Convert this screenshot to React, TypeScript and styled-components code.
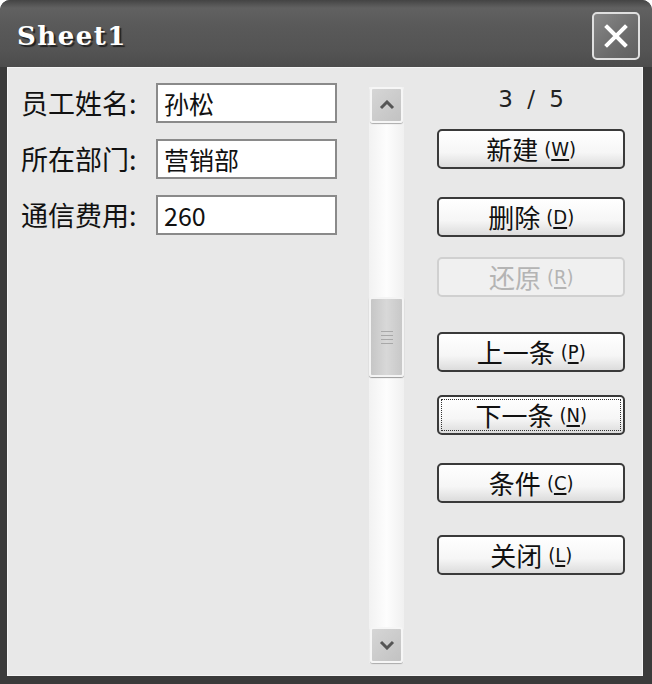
import styled, { createGlobalStyle } from "styled-components";

const GlobalStyle = createGlobalStyle`
  html, body {
    margin: 0;
    padding: 0;
    background: #fff;
  }
  * {
    box-sizing: border-box;
  }
`;

const fields = [
  { label: "员工姓名", value: "孙松" },
  { label: "所在部门", value: "营销部" },
  { label: "通信费用", value: "260" },
];

const buttons = [
  { text: "新建", key: "W", top: 14 },
  { text: "删除", key: "D", top: 28 },
  { text: "还原", key: "R", top: 20, disabled: true },
  { text: "上一条", key: "P", top: 35 },
  { text: "下一条", key: "N", top: 23, focused: true },
  { text: "条件", key: "C", top: 28 },
  { text: "关闭", key: "L", top: 32 },
];

export default function App() {
  return (
    <>
      <GlobalStyle />
      <Window>
        <TitleBar>
          <Title>Sheet1</Title>
          <CloseButton>
            <svg width="26" height="26" viewBox="0 0 26 26">
              <path
                d="M4 4 L22 22 M22 4 L4 22"
                stroke="#fff"
                strokeWidth="4"
                strokeLinecap="square"
              />
            </svg>
          </CloseButton>
        </TitleBar>
        <Body>
          <FieldList>
            {fields.map((f) => (
              <FieldRow key={f.label}>
                <Label>{f.label}:</Label>
                <Input>{f.value}</Input>
              </FieldRow>
            ))}
          </FieldList>
          <ScrollBar>
            <ScrollArrow>
              <svg width="16" height="10" viewBox="0 0 16 10">
                <path d="M2 8 L8 2 L14 8" stroke="#555" strokeWidth="3" fill="none" />
              </svg>
            </ScrollArrow>
            <Track>
              <Thumb $top={174}>
                <Grip />
                <Grip />
                <Grip />
                <Grip />
              </Thumb>
            </Track>
            <ScrollArrow>
              <svg width="16" height="10" viewBox="0 0 16 10">
                <path d="M2 2 L8 8 L14 2" stroke="#555" strokeWidth="3" fill="none" />
              </svg>
            </ScrollArrow>
          </ScrollBar>
          <ButtonColumn>
            <Counter>3 / 5</Counter>
            {buttons.map((b) => (
              <Button
                key={b.key}
                $top={b.top}
                $disabled={b.disabled}
                $focused={b.focused}
              >
                <span>{b.text}</span>
                <Mnemonic>
                  (<u>{b.key}</u>)
                </Mnemonic>
              </Button>
            ))}
          </ButtonColumn>
        </Body>
      </Window>
    </>
  );
}

const Window = styled.div`
  width: 652px;
  height: 684px;
  display: flex;
  flex-direction: column;
  background: #3a3a3a;
  border-radius: 10px 10px 0 0;
  overflow: hidden;
`;

const TitleBar = styled.div`
  height: 67px;
  flex: none;
  display: flex;
  align-items: center;
  justify-content: space-between;
  padding: 0 12px 0 17px;
  background: linear-gradient(
    to bottom,
    #444 0%,
    #616161 12%,
    #595959 40%,
    #545454 75%,
    #4c4c4c 100%
  );
`;

const Title = styled.div`
  font-family: "DejaVu Serif", "Liberation Serif", serif;
  font-weight: bold;
  font-size: 26px;
  color: #fff;
  letter-spacing: 1.5px;
  text-shadow: 2px 2px 1px #222;
  margin-top: 4px;
`;

const CloseButton = styled.div`
  width: 48px;
  height: 48px;
  display: flex;
  align-items: center;
  justify-content: center;
  border: 2px solid #e0e0e0;
  border-radius: 5px;
  background: linear-gradient(135deg, #888 0%, #6c6c6c 60%, #606060 100%);
  margin-top: 4px;
`;

const Body = styled.div`
  flex: 1;
  display: flex;
  align-items: stretch;
  margin: 0 9px 8px 7px;
  background: #e8e8e8;
  padding: 15px 17px 12px 13px;
  border: 1px solid #f4f4f4;
`;

const FieldList = styled.div`
  width: 323px;
  display: flex;
  flex-direction: column;
  gap: 16px;
`;

const FieldRow = styled.div`
  display: flex;
  align-items: center;
`;

const Label = styled.div`
  width: 135px;
  font-family: "Noto Sans CJK SC", sans-serif;
  font-size: 27px;
  color: #111;
  line-height: 40px;
`;

const Input = styled.div`
  width: 181px;
  height: 40px;
  background: #fff;
  border: 2px solid #8a8a8a;
  padding: 0 6px;
  font-family: "Noto Sans CJK SC", sans-serif;
  font-size: 25px;
  line-height: 36px;
  color: #111;
`;

const ScrollBar = styled.div`
  width: 36px;
  margin: 4px 0 0 27px;
  display: flex;
  flex-direction: column;
  background: linear-gradient(to right, #f2f2f2, #fdfdfd 50%, #f0f0f0);
`;

const ScrollArrow = styled.div`
  height: 36px;
  flex: none;
  display: flex;
  align-items: center;
  justify-content: center;
  margin: 0 1px;
  border: 2px solid #f6f6f6;
  border-radius: 3px;
  background: linear-gradient(135deg, #d6d6d6, #c2c2c2);
  box-shadow: 0 1px 1px #aaa;
`;

const Track = styled.div`
  flex: 1;
`;

const Thumb = styled.div<{ $top: number }>`
  margin-top: ${(p) => p.$top}px;
  height: 80px;
  display: flex;
  flex-direction: column;
  align-items: center;
  justify-content: center;
  gap: 3px;
  border: 2px solid #f4f4f4;
  border-radius: 3px;
  background: linear-gradient(to right, #c6c6c6, #d8d8d8 50%, #c8c8c8);
  box-shadow: 0 1px 1px #999;
`;

const Grip = styled.div`
  width: 12px;
  height: 1px;
  background: #f2f2f2;
  border-bottom: 1px solid #a8a8a8;
`;

const ButtonColumn = styled.div`
  margin-left: 33px;
  width: 189px;
  display: flex;
  flex-direction: column;
`;

const Counter = styled.div`
  height: 32px;
  text-align: center;
  font-family: "DejaVu Sans", sans-serif;
  font-size: 23px;
  line-height: 32px;
  color: #222;
  word-spacing: 7px;
`;

const Button = styled.div<{
  $top: number;
  $disabled?: boolean;
  $focused?: boolean;
}>`
  position: relative;
  height: 40px;
  flex: none;
  margin-top: ${(p) => p.$top}px;
  display: flex;
  align-items: center;
  justify-content: center;
  gap: 6px;
  border: 2px solid ${(p) => (p.$disabled ? "#d0d0d0" : "#3a3a3a")};
  border-radius: 5px;
  background: ${(p) =>
    p.$disabled
      ? "#f0f0f0"
      : "linear-gradient(to bottom, #ffffff 0%, #f6f6f6 60%, #dcdcdc 100%)"};
  color: ${(p) => (p.$disabled ? "#b4b4b4" : "#111")};
  font-family: "Noto Sans CJK SC", sans-serif;
  font-size: 26px;
  line-height: 1;
  ${(p) =>
    p.$focused &&
    `
    &::after {
      content: "";
      position: absolute;
      inset: 2px;
      border: 1px dotted #333;
    }
  `}
`;

const Mnemonic = styled.span`
  font-family: "DejaVu Sans Condensed", "Liberation Sans Narrow", sans-serif;
  font-size: 20px;
  u {
    text-underline-offset: 3px;
  }
`;
